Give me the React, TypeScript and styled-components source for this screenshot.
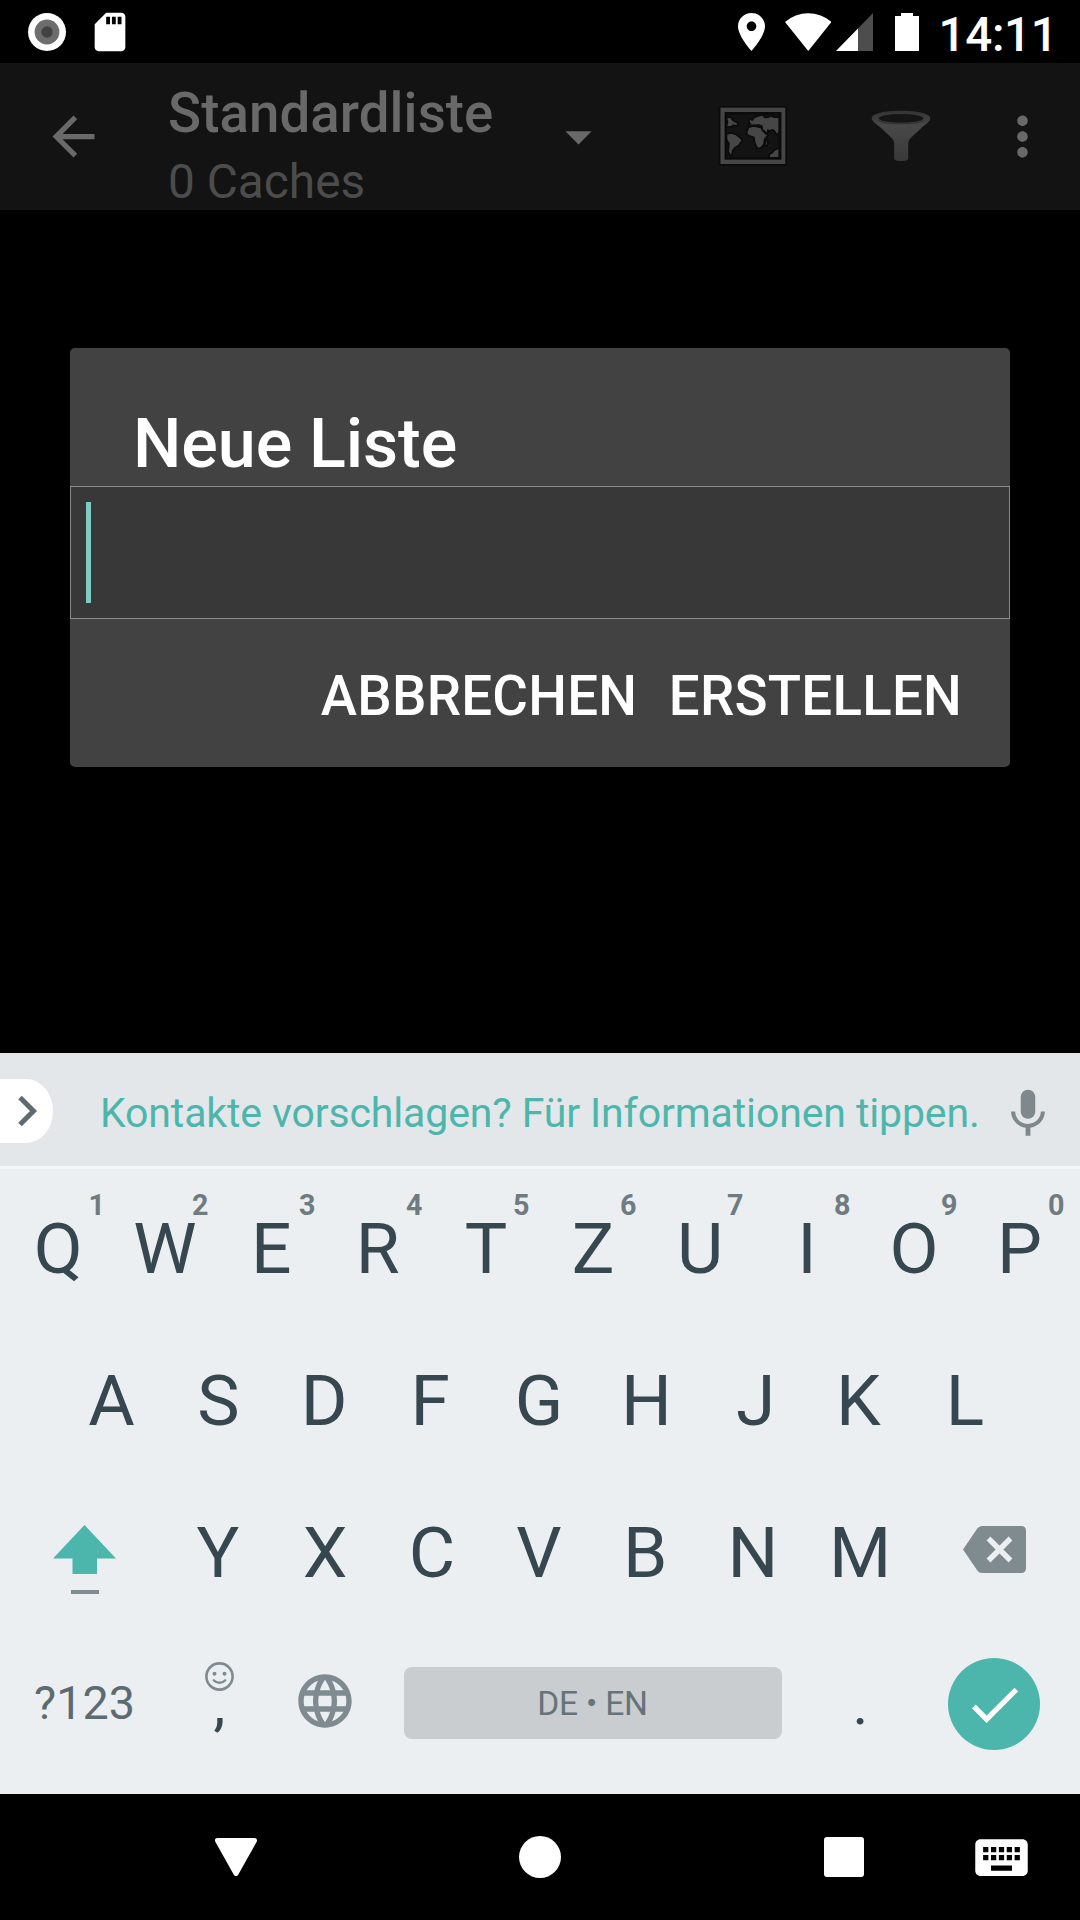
import React from "react";
import styled, { createGlobalStyle } from "styled-components";

const GlobalStyle = createGlobalStyle`
  body { margin: 0; background: #000; font-family: Roboto, "Noto Sans", sans-serif; }
  * { box-sizing: border-box; }
  svg { display: block; flex: none; }
`;

const Screen = styled.div`
  width: 1080px;
  height: 1920px;
  display: flex;
  flex-direction: column;
  background: #000;
  overflow: hidden;
`;

/* ---------- status bar ---------- */

const StatusBar = styled.header`
  height: 63px;
  flex: none;
  display: flex;
  align-items: center;
  justify-content: space-between;
  padding: 0 21px 0 28.3px;
`;

const StatusGroup = styled.div`
  display: flex;
  align-items: center;
`;

const Spaced = styled.div<{ $left?: number; $top?: number }>`
  flex: none;
  margin-left: ${(p) => p.$left ?? 0}px;
  padding-top: ${(p) => p.$top ?? 0}px;
`;

const Clock = styled.span`
  margin-left: 19.5px;
  padding-top: 6px;
  width: 120.5px;
  white-space: nowrap;
  font-size: 47.5px;
  line-height: 56px;
  font-weight: 500;
  letter-spacing: -0.3px;
  color: #fff;
`;

/* ---------- app bar ---------- */

const AppBar = styled.div`
  height: 147px;
  flex: none;
  display: flex;
  align-items: center;
  padding: 0 0 1px 41.5px;
  background: #131313;
`;

const ListPicker = styled.div`
  align-self: flex-start;
  width: 379px;
  margin-left: 63.5px;
  padding-top: 9.5px;
`;

const ListName = styled.div`
  font-size: 54.6px;
  line-height: 80px;
  font-weight: 500;
  letter-spacing: 0.1px;
  color: #696969;
`;

const ListCount = styled.div`
  padding-top: 1px;
  font-size: 47.8px;
  line-height: 56px;
  color: #4c4c4c;
`;

/* ---------- dialog ---------- */

const Content = styled.main`
  height: 843px;
  flex: none;
  padding: 138px 70px 0;
`;

const Dialog = styled.section`
  height: 419px;
  display: flex;
  flex-direction: column;
  background: #424242;
  border-radius: 5px;
`;

const DialogTitle = styled.h1`
  margin: 0;
  height: 138px;
  padding: 55.5px 0 0 63px;
  font-size: 68.25px;
  line-height: 80px;
  font-weight: 500;
  letter-spacing: -0.1px;
  color: #fff;
`;

const Field = styled.div`
  height: 133px;
  display: flex;
  align-items: center;
  padding-left: 15px;
  border: 1px solid #8b8b8b;
  background: #383838;
`;

const Caret = styled.span`
  width: 5px;
  height: 101px;
  background: #80cbc4;
`;

const Actions = styled.div`
  flex: 1;
  display: flex;
  align-items: center;
  justify-content: flex-end;
  gap: 31.5px;
  padding: 6px 48px 0 0;
`;

const Action = styled.button`
  padding: 0;
  border: 0;
  background: none;
  font: 500 54.6px/64px Roboto, sans-serif;
  letter-spacing: 0.25px;
  color: #fff;
`;

/* ---------- keyboard ---------- */

const Keyboard = styled.section`
  height: 741px;
  flex: none;
  background: #ebeff2;
`;

const Suggestions = styled.div`
  height: 116px;
  display: flex;
  align-items: center;
  background: #e3e7ea;
  border-bottom: 3px solid #f3f6f9;
`;

const Expand = styled.div`
  width: 52.5px;
  height: 64px;
  margin-bottom: -2px;
  display: flex;
  align-items: center;
  padding-left: 17px;
  background: #fff;
  border-radius: 0 27px 27px 0 / 0 32px 32px 0;
`;

const Hint = styled.div`
  width: 886px;
  margin-left: 47.5px;
  padding-top: 7px;
  white-space: nowrap;
  font-size: 41px;
  line-height: 48px;
  letter-spacing: -0.12px;
  color: #4db6ac;
`;

const Rows = styled.div`
  padding-top: 3.75px;
`;

const Row = styled.div<{ $height?: number }>`
  height: ${(p) => p.$height ?? 152}px;
  display: flex;
  justify-content: center;
  padding-right: 1px;
`;

const Key = styled.div<{ $width?: number; $lift?: number; $inkShift?: number }>`
  position: relative;
  width: ${(p) => p.$width ?? 107}px;
  padding-bottom: ${(p) => p.$lift ?? 0}px;
  display: flex;
  align-items: center;
  justify-content: center;
  text-indent: ${(p) => (p.$inkShift ?? 0) * 2}px;
  font-size: 71.3px;
  line-height: 84px;
  color: #37474f;
`;

const Alt = styled.sup<{ $right: number }>`
  position: absolute;
  top: 17px;
  right: ${(p) => p.$right}px;
  text-indent: 0;
  font-size: 28.7px;
  line-height: 30px;
  font-weight: 700;
  color: #6f7b80;
`;

const Smiley = styled.div`
  position: absolute;
  top: 33px;
  left: 40.3px;
`;

const Symbols = styled.span`
  font-size: 46.7px;
  line-height: 56px;
  color: #5c6b71;
`;

const Punctuation = styled.span<{ $left: number }>`
  padding-left: ${(p) => p.$left}px;
  padding-top: 1px;
  font-size: 60px;
  line-height: 70px;
`;

const SpaceBar = styled.div`
  width: 378px;
  height: 72px;
  display: flex;
  align-items: center;
  justify-content: center;
  padding-top: 2px;
  border-radius: 8px;
  background: #c9cdd0;
  font-size: 33.6px;
  line-height: 40px;
  letter-spacing: -0.2px;
  color: #66737a;
`;

const Enter = styled.div`
  width: 92px;
  height: 92px;
  margin-top: 2px;
  display: grid;
  place-items: center;
  border-radius: 50%;
  background: #4db6ac;
`;

/* ---------- navigation bar ---------- */

const NavBar = styled.nav`
  flex: 1;
  display: flex;
  align-items: center;
  padding-left: 215px;
`;

/* ---------- drawings ---------- */

const Material = ({ size, color, d }: { size: number; color: string; d: string }) => (
  <svg width={size} height={size} viewBox="0 0 24 24" fill={color}>
    <path d={d} />
  </svg>
);

const paths = {
  sd: "M18 2h-8L4.02 8 4 20c0 1.1.9 2 2 2h12c1.1 0 2-.9 2-2V4c0-1.1-.9-2-2-2zm-6 6h-2V4h2v4zm3 0h-2V4h2v4zm3 0h-2V4h2v4z",
  back: "M20 11H7.83l5.59-5.59L12 4l-8 8 8 8 1.41-1.41L7.83 13H20v-2z",
  drop: "M7 10l5 5 5-5z",
  more: "M12 8c1.1 0 2-.9 2-2s-.9-2-2-2-2 .9-2 2 .9 2 2 2zm0 2c-1.1 0-2 .9-2 2s.9 2 2 2 2-.9 2-2-.9-2-2-2zm0 6c-1.1 0-2 .9-2 2s.9 2 2 2 2-.9 2-2-.9-2-2-2z",
  mic: "M12 14c1.66 0 2.99-1.34 2.99-3L15 5c0-1.66-1.34-3-3-3S9 3.34 9 5v6c0 1.66 1.34 3 3 3zm5.3-3c0 3-2.54 5.1-5.3 5.1S6.7 14 6.7 11H5c0 3.41 2.72 6.23 6 6.72V21h2v-3.28c3.28-.48 6-3.3 6-6.72h-1.7z",
  globe: "M11.99 2C6.47 2 2 6.48 2 12s4.47 10 9.99 10C17.52 22 22 17.52 22 12S17.52 2 11.99 2zm6.93 6h-2.95c-.32-1.25-.78-2.45-1.38-3.56 1.84.63 3.37 1.91 4.33 3.56zM12 4.04c.83 1.2 1.48 2.53 1.91 3.96h-3.82c.43-1.43 1.08-2.76 1.91-3.96zM4.26 14C4.1 13.36 4 12.69 4 12s.1-1.36.26-2h3.38c-.08.66-.14 1.32-.14 2 0 .68.06 1.34.14 2H4.26zm.82 2h2.95c.32 1.25.78 2.45 1.38 3.56-1.84-.63-3.37-1.9-4.33-3.56zm2.95-8H5.08c.96-1.66 2.49-2.93 4.33-3.56C8.81 5.55 8.35 6.75 8.03 8zM12 19.96c-.83-1.2-1.48-2.53-1.91-3.96h3.82c-.43 1.43-1.08 2.76-1.91 3.96zM14.34 14H9.66c-.09-.66-.16-1.32-.16-2 0-.68.07-1.35.16-2h4.68c.09.65.16 1.32.16 2 0 .68-.07 1.34-.16 2zm.25 5.56c.6-1.11 1.06-2.31 1.38-3.56h2.95c-.96 1.65-2.49 2.93-4.33 3.56zM16.36 14c.08-.66.14-1.32.14-2 0-.68-.06-1.34-.14-2h3.38c.16.64.26 1.31.26 2s-.1 1.36-.26 2h-3.38z",
  check: "M9 16.17L4.83 12l-1.42 1.41L9 19 21 7l-1.41-1.41z",
  keyboard: "M20 5H4c-1.1 0-1.99.9-1.99 2L2 17c0 1.1.9 2 2 2h16c1.1 0 2-.9 2-2V7c0-1.1-.9-2-2-2zm-9 3h2v2h-2V8zm0 3h2v2h-2v-2zM8 8h2v2H8V8zm0 3h2v2H8v-2zm-1 2H5v-2h2v2zm0-3H5V8h2v2zm9 7H8v-2h8v2zm0-4h-2v-2h2v2zm0-3h-2V8h2v2zm3 3h-2v-2h2v2zm0-3h-2V8h2v2z",
};

const Record = () => (
  <svg width="38" height="38" viewBox="0 0 38 38">
    <circle cx="19" cy="19" r="19" fill="#fff" />
    <circle cx="19" cy="19" r="12.4" fill="#6d6d6d" />
    <circle cx="19" cy="19" r="5.7" fill="#424242" />
  </svg>
);

const Pin = () => (
  <svg width="27" height="38" viewBox="5 2 14 20" preserveAspectRatio="none">
    <path
      fill="#fff"
      d="M12 2C8.13 2 5 5.13 5 9c0 5.25 7 13 7 13s7-7.75 7-13c0-3.87-3.13-7-7-7zm0 9.5c-1.38 0-2.5-1.12-2.5-2.5s1.12-2.5 2.5-2.5 2.5 1.12 2.5 2.5-1.12 2.5-2.5 2.5z"
    />
  </svg>
);

const Wifi = () => (
  <svg width="46.5" height="38" viewBox="0 0 47 38" preserveAspectRatio="none">
    <path d="M0 9A36 36 0 0 1 47 9L23.5 38Z" fill="#fff" />
  </svg>
);

const Signal = () => (
  <svg width="37" height="38" viewBox="0 0 37 38">
    <path d="M37 0V38H0Z" fill="#4d4d4d" />
    <path d="M22 15.4V38H0Z" fill="#fff" />
  </svg>
);

const Battery = () => (
  <svg width="24" height="38" viewBox="0 0 24 38">
    <path d="M6 0H18V3H24V38H0V3H6Z" fill="#fff" />
  </svg>
);

const WorldMap = () => (
  <svg width="71" height="62" viewBox="516 315 206 186" preserveAspectRatio="none">
    <rect x="521" y="318" width="198" height="179" rx="4" fill="#0b0b0b" />
    <rect x="526" y="323" width="188" height="169" fill="#464646" />
    <rect x="538" y="336" width="165" height="143" fill="#0b0b0b" />
    <rect x="545" y="344" width="150" height="128" fill="#131313" />
    <g fill="#464646" stroke="#0b0b0b" strokeWidth="10" strokeLinejoin="round" paintOrder="stroke">
      <path d="M546 379L549 367 546 355 554 353 560 362 575 371 572 375 562 373 557 378Z" />
      <path d="M546 404L556 401 570 405 587 420 578 434 566 442 559 452 557 465 551 455 553 430 546 418Z" />
      <path d="M604 398L609 384 622 380 637 383 649 388 654 402 661 405 652 417 650 432 642 442 635 443 628 428 625 410 608 404Z" />
      <path d="M610 376L617 372 612 368 611 358 618 364 626 354 640 349 652 348 650 354 662 355 675 350 680 354 694 354V396L690 401 684 391 677 387 668 390 662 388 660 397 650 388 648 377 637 372 622 376Z" />
      <path d="M657 434L660 422 661 428 659 435Z" />
      <path d="M670 464L679 459 683 453 694 447V471H670Z" />
    </g>
    <path d="M609 376Q622 370 634 375L649 375 645 379 632 379 620 378Z" fill="#101010" />
    <path d="M645 390L658 402 664 395" fill="none" stroke="#101010" strokeWidth="3" />
  </svg>
);

const Funnel = () => (
  <svg width="64.4" height="57.4" viewBox="955 322 187 172" preserveAspectRatio="none">
    <defs>
      <linearGradient id="funnel" x1="0" y1="0" x2="0" y2="1">
        <stop offset="0" stopColor="#333" />
        <stop offset="0.3" stopColor="#484848" />
        <stop offset="1" stopColor="#393939" />
      </linearGradient>
    </defs>
    <path
      d="M963 356C963 341 1000 333 1048 333S1133 341 1133 356C1133 366 1120 374 1108 384L1076 415Q1069 421 1069 430V476Q1067 484 1048.500 484T1028 476V430Q1028 421 1021 415L989 384C977 374 963 366 963 356Z"
      fill="url(#funnel)"
    />
    <ellipse cx="1048" cy="356" rx="65" ry="13" fill="#151515" />
    <path d="M983 360C990 376 1106 376 1113 360" fill="none" stroke="#303030" strokeWidth="3" />
  </svg>
);

const Chevron = () => (
  <svg width="21" height="32" viewBox="0 0 21 32">
    <path d="M3 2.500L16.500 16 3 29.500" fill="none" stroke="#5f6b71" strokeWidth="5" />
  </svg>
);

const Shift = () => (
  <svg width="63" height="69" viewBox="0 0 63 69">
    <path d="M31.500 0L63 33.500H44V49H19.500V33.500H0Z" fill="#4db6ac" />
    <rect x="18" y="65" width="28" height="4" fill="#7f8b90" />
  </svg>
);

const Backspace = () => (
  <svg width="63" height="47" viewBox="0 0 63 47">
    <path
      d="M19 0H58Q63 0 63 5V42Q63 47 58 47H19Q16 47 14.300 44.500L0 23.500 14.300 2.500Q16 0 19 0Z"
      fill="#808b8f"
    />
    <path d="M25.500 12.500L47.500 34.500M47.500 12.500L25.500 34.500" stroke="#ebeff2" strokeWidth="5.400" />
  </svg>
);

const Smile = () => (
  <svg width="29" height="29" viewBox="0 0 29 29" fill="none" stroke="#7f8b90">
    <circle cx="14.500" cy="14.500" r="13.100" strokeWidth="2.600" />
    <circle cx="9.500" cy="11.700" r="2" fill="#7f8b90" stroke="none" />
    <circle cx="19.500" cy="11.700" r="2" fill="#7f8b90" stroke="none" />
    <path d="M8.800 18.300Q14.500 23.300 20.200 18.300" strokeWidth="2.300" strokeLinecap="round" />
  </svg>
);

const BackTriangle = () => (
  <svg width="42" height="38" viewBox="0 0 42 38">
    <path d="M2.500 2.500H39.500L21 35.500Z" fill="#fff" stroke="#fff" strokeWidth="5" strokeLinejoin="round" />
  </svg>
);

const HomeDot = styled.div`
  width: 42px;
  height: 42px;
  margin-left: 262px;
  border-radius: 50%;
  background: #fff;
`;

const RecentSquare = styled.div`
  width: 40px;
  height: 40px;
  margin: 0 105.5px 0 263px;
  border-radius: 3px;
  background: #fff;
`;

const inkShift: Record<string, number> = {
  R: -1.2, P: -1.6, E: -0.8, D: -1.3, F: -2.4, G: -0.5, J: 2.2, K: -2.2, L: -2.5, B: -0.8, Q: 0.4,
};

const Letter = ({ char, children }: { char: string; children?: React.ReactNode }) => (
  <Key $inkShift={inkShift[char]}>
    {char}
    {children}
  </Key>
);

const letters = (text: string) => text.split("").map((c) => <Letter key={c} char={c} />);

export default function App() {
  return (
    <Screen>
      <GlobalStyle />
      <StatusBar>
        <StatusGroup>
          <Record />
          <Spaced $left={21}><Material size={46} color="#fff" d={paths.sd} /></Spaced>
        </StatusGroup>
        <StatusGroup>
          <Pin />
          <Spaced $left={19.5}><Wifi /></Spaced>
          <Spaced $left={5}><Signal /></Spaced>
          <Spaced $left={22}><Battery /></Spaced>
          <Clock>14:11</Clock>
        </StatusGroup>
      </StatusBar>

      <AppBar>
        <Material size={63} color="#696969" d={paths.back} />
        <ListPicker>
          <ListName>Standardliste</ListName>
          <ListCount>0 Caches</ListCount>
        </ListPicker>
        <Material size={63} color="#696969" d={paths.drop} />
        <Spaced $left={107}><WorldMap /></Spaced>
        <Spaced $left={81}><Funnel /></Spaced>
        <Spaced $left={57.5}><Material size={63} color="#696969" d={paths.more} /></Spaced>
      </AppBar>

      <Content>
        <Dialog>
          <DialogTitle>Neue Liste</DialogTitle>
          <Field><Caret /></Field>
          <Actions>
            <Action>ABBRECHEN</Action>
            <Action>ERSTELLEN</Action>
          </Actions>
        </Dialog>
      </Content>

      <Keyboard>
        <Suggestions>
          <Expand><Chevron /></Expand>
          <Hint>Kontakte vorschlagen? Für Informationen tippen.</Hint>
          <Spaced $left={13} $top={8}><Material size={58} color="#7f898d" d={paths.mic} /></Spaced>
        </Suggestions>
        <Rows>
          <Row>
            {"QWERTZUIOP".split("").map((c, i) => (
              <Letter key={c} char={c}>
                <Alt $right={i === 0 ? 6.5 : 10}>{(i + 1) % 10}</Alt>
              </Letter>
            ))}
          </Row>
          <Row>{letters("ASDFGHJKL")}</Row>
          <Row>
            <Key $width={160}><Spaced $top={14}><Shift /></Spaced></Key>
            {letters("YXCVBNM")}
            <Key $width={161} $lift={6}><Backspace /></Key>
          </Row>
          <Row $height={149}>
            <Key $width={160}><Symbols>?123</Symbols></Key>
            <Key>
              <Smiley><Smile /></Smiley>
              <Punctuation $left={3}>,</Punctuation>
            </Key>
            <Key $lift={4}><Material size={64} color="#7f8b90" d={paths.globe} /></Key>
            <Key $width={428}><SpaceBar>DE • EN</SpaceBar></Key>
            <Key><Punctuation $left={1}>.</Punctuation></Key>
            <Key $width={161}><Enter><Material size={63} color="#fff" d={paths.check} /></Enter></Key>
          </Row>
        </Rows>
      </Keyboard>

      <NavBar>
        <BackTriangle />
        <HomeDot />
        <RecentSquare />
        <Material size={63} color="#fff" d={paths.keyboard} />
      </NavBar>
    </Screen>
  );
}
